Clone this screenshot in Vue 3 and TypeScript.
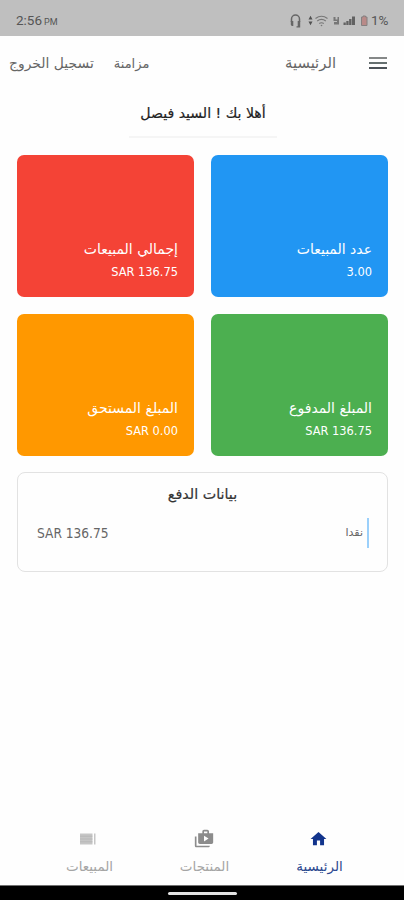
<script setup lang="ts">
interface Tile {
  title: string
  value: string
  tone: string
}

interface Tab {
  label: string
  icon: 'home' | 'shop' | 'list'
  active?: boolean
}

const tiles: Tile[] = [
  { title: 'عدد المبيعات', value: '3.00', tone: 'blue' },
  { title: 'إجمالي المبيعات', value: 'SAR 136.75', tone: 'red' },
  { title: 'المبلغ المدفوع', value: 'SAR 136.75', tone: 'green' },
  { title: 'المبلغ المستحق', value: 'SAR 0.00', tone: 'orange' },
]

const tabs: Tab[] = [
  { label: 'الرئيسية', icon: 'home', active: true },
  { label: 'المنتجات', icon: 'shop' },
  { label: 'المبيعات', icon: 'list' },
]
</script>

<template>
  <div class="screen" dir="rtl">
    <div class="status" dir="ltr">
      <div class="clock"><span>2:56</span><small>PM</small></div>
      <svg class="status-icons" width="82" height="16" viewBox="0 0 82 16">
        <path d="M2.500 9V6a4 4 0 0 1 8 0V9" fill="none" stroke="#666" stroke-width="1.500" />
        <path d="M1.800 8h2.500v5H3.200a1.400 1.400 0 0 1-1.400-1.400zM8.700 8h2.500v6.500H7.500v-1.200h1.200z" fill="#666" />
        <path d="M21.500 2.800l2 3.700h-4zM21.500 12.200l2-3.700h-4z" fill="#505050" />
        <g fill="none" stroke="#777" stroke-width="1.100">
          <path d="M26.500 5.500q6-4.500 12 0M28.200 8q4.300-3.200 8.600 0M30.200 10.500q2.300-1.600 4.600 0" />
        </g>
        <circle cx="32.500" cy="12.500" r=".8" fill="#777" />
        <path d="M44.500 4h2v2.500h2V4h1.500v7.500h-5V9h3V8h-3.500z" fill="#777" />
        <path d="M54.500 9.500h2.300V12h-2.300zM57.300 8h2.300v4h-2.300zM60.100 6h2.400v6h-2.400zM63 3.500h3V12h-3z" fill="#626262" />
        <path d="M72.500 4h1.500V3h2.500v1H78v8.500h-5.500z" fill="#b98a88" stroke="#858080" stroke-width="1" />
      </svg>
      <span class="percent">1%</span>
    </div>

    <header class="bar">
      <svg class="menu" width="18" height="14" viewBox="0 0 18 14">
        <path d="M0 2h18" stroke="#858888" stroke-width="2" />
        <path d="M0 7h18" stroke="#667070" stroke-width="2" />
        <path d="M0 12h18" stroke="#4c5258" stroke-width="2" />
      </svg>
      <h1 class="page-title">الرئيسية</h1>
      <nav class="actions">
        <a class="sync">مزامنة</a>
        <a class="logout">تسجيل الخروج</a>
      </nav>
    </header>

    <div class="welcome"><span>أهلا بك ! السيد فيصل</span></div>

    <main class="tiles">
      <section v-for="t in tiles" :key="t.title" class="tile" :class="t.tone">
        <h2>{{ t.title }}</h2>
        <p dir="ltr">{{ t.value }}</p>
      </section>
    </main>

    <section class="payments">
      <h3>بيانات الدفع</h3>
      <div class="pay-row">
        <span class="method">نقدا</span>
        <span class="amount" dir="ltr">SAR 136.75</span>
      </div>
    </section>

    <footer class="tabs">
      <div v-for="t in tabs" :key="t.label" class="tab" :class="[t.icon, { active: t.active }]">
        <svg v-if="t.icon === 'home'" width="19" height="20" viewBox="0 0 24 24">
          <path d="M10 20v-6h4v6h5v-8h3L12 3 2 12h3v8z" fill="currentColor" />
        </svg>
        <svg v-else-if="t.icon === 'shop'" width="20" height="20" viewBox="0 0 24 24">
          <path
            d="M3 9H1v11c0 1.110.890 2 2 2h14c1.110 0 2-.890 2-2H3V9zM18 5V3c0-1.110-.890-2-2-2h-4c-1.110 0-2 .890-2 2v2H5v11c0 1.110.890 2 2 2h14c1.110 0 2-.890 2-2V5h-5zm-6-2h4v2h-4V3zm0 12V8l5.500 3.500L12 15z"
            fill="#8c8c8c"
          />
        </svg>
        <svg v-else width="20" height="20" viewBox="0 0 20 20">
          <path d="M2 4.500h12.500v11H2zM16 4.500h1.500v11H16z" fill="#c6c6c6" />
          <path d="M2 7.200h12.500M2 10h12.500M2 12.800h12.500" stroke="#b2b2b2" stroke-width=".7" />
        </svg>
        <span>{{ t.label }}</span>
      </div>
    </footer>

    <div class="system-nav"><i></i></div>
  </div>
</template>

<style>
body {
  background: #fff;
}
</style>

<style scoped>
.screen {
  width: 404px;
  height: 900px;
  display: flex;
  flex-direction: column;
  overflow: hidden;
  background: #fefefe;
  color: #666;
  font-family: 'DejaVu Sans', sans-serif;
  white-space: nowrap;
}
h1, h2, h3, p {
  margin: 0;
  font-weight: 400;
}
.status {
  flex: none;
  height: 36px;
  display: flex;
  align-items: center;
  box-sizing: border-box;
  padding: 3px 13px 0 16px;
  background: #bfbfbf;
  color: #555;
  font-family: Roboto, sans-serif;
  font-size: 13.5px;
}
.status-icons {
  margin-top: 2px;
}
.clock {
  flex: 1;
  display: flex;
  align-items: baseline;
  gap: 2px;
}
.clock small {
  font-size: 9px;
}
.percent {
  width: 20px;
}
.bar {
  flex: none;
  height: 54px;
  display: flex;
  align-items: center;
  padding: 0 17px 0 9px;
}
.page-title {
  margin-right: 33px;
  padding-bottom: 2px;
  font-size: 14.8px;
}
.actions {
  display: flex;
  align-items: center;
  gap: 20px;
  margin-right: auto;
  font-size: 13px;
}
.logout {
  font-size: 13.900px;
}
.welcome {
  flex: none;
  width: 148px;
  height: 48px;
  margin: 0 127px 0 auto;
  box-sizing: border-box;
  border-bottom: 2px solid #f5f5f5;
  text-align: center;
  line-height: 46px;
  font-size: 14.100px;
  color: #222;
  -webkit-text-stroke: 0.2px currentColor;
}
.tiles {
  flex: none;
  display: grid;
  grid-template-columns: 177px 177px;
  grid-auto-rows: 142px;
  gap: 17px;
  padding: 17px 16px 0 17px;
}
.tile {
  display: flex;
  flex-direction: column;
  justify-content: flex-end;
  box-sizing: border-box;
  padding: 0 16px 15px;
  border-radius: 7px;
  color: #fff;
}
.tile h2 {
  font-size: 14px;
  line-height: 25px;
}
.tile p {
  text-align: right;
  font-family: 'DejaVu Sans Condensed', 'DejaVu Sans', sans-serif;
  font-stretch: condensed;
  font-size: 12.700px;
  line-height: 20px;
}
.blue { background: #2196f3; }
.red { background: #f44336; }
.green { background: #4caf50; }
.orange { background: #ff9800; }
.payments {
  flex: none;
  height: 100px;
  margin: 16px 16px 0 17px;
  box-sizing: border-box;
  border: 1px solid #e2e2e2;
  border-radius: 8px;
}
.payments h3 {
  padding-top: 7px;
  line-height: 28px;
  text-align: center;
  font-size: 14.300px;
  color: #333;
  -webkit-text-stroke: 0.2px currentColor;
}
.pay-row {
  display: flex;
  align-items: center;
  justify-content: space-between;
  height: 30px;
  margin: 10px 18px 0 19px;
}
.method {
  border-right: 2px solid #9bd0fb;
  padding-right: 4px;
  line-height: 30px;
  font-size: 11px;
}
.amount {
  font-family: 'DejaVu Sans Condensed', 'DejaVu Sans', sans-serif;
  font-stretch: condensed;
  font-size: 13.600px;
}
.tabs {
  flex: none;
  height: 58px;
  display: flex;
  justify-content: space-between;
  margin-top: auto;
  padding: 0 27px 0 32px;
}
.tab {
  width: 115px;
  display: flex;
  flex-direction: column;
  align-items: center;
  color: #a5a5a5;
  font-size: 13.500px;
}
.tab span {
  line-height: 18px;
}
.tab svg {
  margin: 2px 3px 8px 0;
}
.tab.shop svg {
  margin-right: 2px;
}
.tab.active {
  color: #2c488f;
}
.tab.active svg {
  color: #12348c;
}
.system-nav {
  flex: none;
  height: 15px;
  display: flex;
  justify-content: center;
  box-sizing: border-box;
  border-top: 1px solid #707070;
  background: #000;
}
.system-nav i {
  width: 69px;
  height: 3px;
  margin-top: 6px;
  border-radius: 2px;
  background: #e2e2e2;
}
</style>
